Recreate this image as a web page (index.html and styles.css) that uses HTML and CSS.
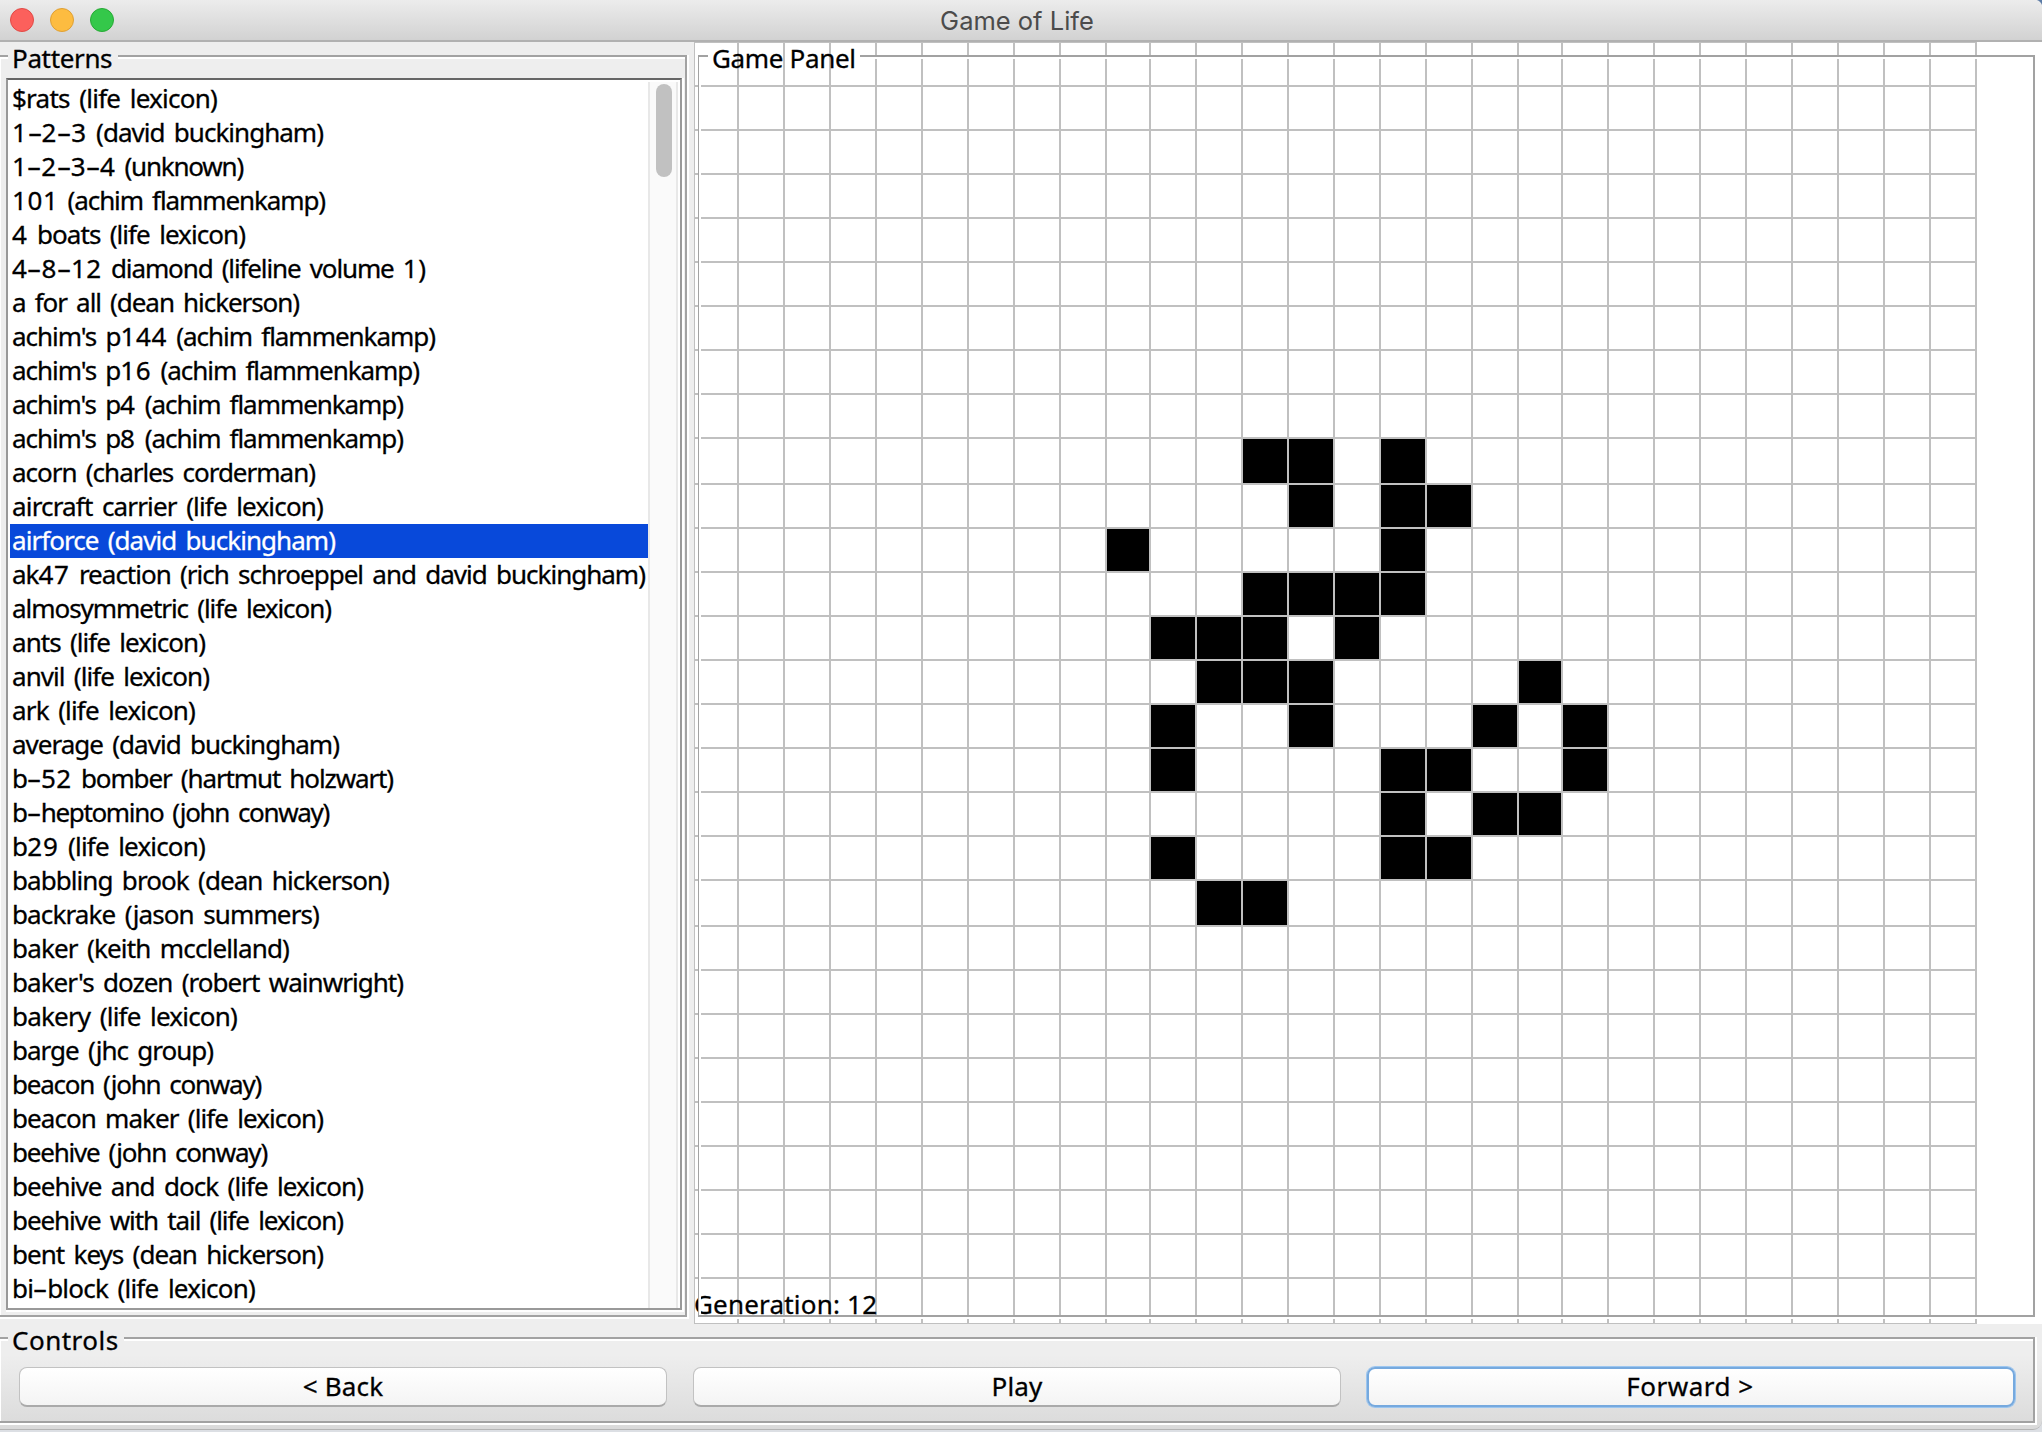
FILE: index.html
```html
<!DOCTYPE html>
<html lang="en">
<head>
<meta charset="utf-8">
<title>Game of Life</title>
<link rel="stylesheet" href="styles.css">
</head>
<body>
<div class="window">
  <header class="titlebar">
    <span class="dot dot-close"></span><span class="dot dot-min"></span><span class="dot dot-max"></span>
    <h1 class="window-title">Game of Life</h1>
  </header>
  <main class="content">
    <section class="group patterns">
      <div class="group-head"><i class="rule rule-stub"></i><h2 class="legend legend-patterns">Patterns</h2><i class="rule rule-fill"></i></div>
      <div class="group-body">
        <div class="listbox">
          <ul class="list" id="list"></ul>
          <div class="track"><div class="thumb"></div></div>
        </div>
      </div>
    </section>
    <section class="game">
      <svg class="board" width="1348" height="1282" viewBox="694 42 1348 1282" shape-rendering="crispEdges">
        <rect x="694" y="42" width="1348" height="1282" fill="#fff"/>
        <g id="cells" fill="#000"></g>
        <g id="lines" fill="#c0c0c0"></g>
        <text class="board-text" x="694" y="1314" textLength="183">Generation: 12</text>
        <!-- etched frame: light line under the grey one -->
        <path fill="#fff" d="M699 57h9v2h-9zM860 57h1173v2h-1173zM699 57h2v1258h-2zM2035 57h2v1262h-2zM698 1317h1339v2h-1339z"/>
        <path fill="#a2a2a2" d="M698 55h10v2h-10zM860 55h1175v2h-1175zM698 55h1v1262h-1zM2033 55h2v1262h-2zM698 1315h1337v2h-1337z"/>
        <text class="board-text" x="712" y="68" textLength="144">Game Panel</text>
      </svg>
    </section>
  </main>
  <section class="group controls">
    <div class="group-head"><i class="rule rule-stub"></i><h2 class="legend legend-controls">Controls</h2><i class="rule rule-fill"></i></div>
    <div class="group-body buttons">
      <button class="btn">&lt; Back</button>
      <button class="btn">Play</button>
      <button class="btn btn-focus">Forward &gt;</button>
    </div>
  </section>
</div>
<script src="app.js"></script>
</body>
</html>
```
FILE: styles.css
```css
* { box-sizing: border-box; margin: 0; padding: 0; }
body { width: 2042px; height: 1432px; overflow: hidden; background: #dcdfe4; font-family: "Noto Sans", sans-serif; font-size: 26px; color: #000; }
.window { display: flex; flex-direction: column; height: 1430px; background: linear-gradient(#eee, #eee 1355px, #dadada 1428px); border-bottom: 1px solid #b4b4b4; border-bottom-right-radius: 9px; overflow: hidden; }

.titlebar { position: relative; flex: none; display: flex; align-items: center; gap: 16px; height: 42px; padding: 0 10px; background: radial-gradient(circle at 0 100%, transparent 8px, #5b7ba6 9px) 100% 0 / 8px 8px no-repeat, linear-gradient(#ececec, #d2d2d2); border-bottom: 2px solid #b1b1b1; }
.dot { width: 24px; height: 24px; border-radius: 50%; border: 1px solid; }
.dot-close { background: #fc605c; border-color: #e14a46; }
.dot-min { background: #fdbc40; border-color: #dfa033; }
.dot-max { background: #34c84a; border-color: #27aa35; }
.window-title { position: absolute; left: 0; right: 8px; top: 0; text-align: center; font: 400 25.5px/42px Inter, sans-serif; color: #4b4b4b; }

.content { flex: none; display: flex; gap: 5px; height: 1282px; }
.group { display: flex; flex-direction: column; }
.group-head { flex: none; display: flex; }
.rule { display: block; margin-top: 13px; border-top: 2px solid #a2a2a2; }
.rule-stub { width: 8px; background: linear-gradient(#fff, #fff) 0 0 / 100% 2px no-repeat, linear-gradient(#fff, #fff) 0 0 / 1px 100% no-repeat; }
.rule-fill { flex: 1; margin-right: 2px; border-right: 2px solid #a2a2a2; box-shadow: inset 0 2px #fff, 2px 0 #fff; }
.group-body { flex: 1; margin: 0 2px 2px 0; border: solid #a2a2a2; border-width: 0 2px 2px 0; box-shadow: inset 1px 0 #fff, 2px 0 #fff, 0 2px #fff, 2px 2px #fff; }
.legend { height: 34px; padding-left: 4px; font-weight: 400; font-size: 26px; line-height: 33px; white-space: nowrap; -webkit-text-stroke: 0.3px; }
.legend-patterns { width: 110px; letter-spacing: -0.35px; }
.legend-controls { width: 116px; letter-spacing: 0.5px; }

.patterns { width: 689px; height: 1277px; }
.patterns .group-head { height: 36px; }
.patterns .group-body { padding: 0 3px 5px 6px; }
.listbox { display: flex; height: 1232px; padding: 2px 2px 0 2px; background: #fff; border: 2px solid #999; border-top-color: #666; box-shadow: 2px 0 #fff, 0 2px #fff, 2px 2px #fff; }
.list { width: 638px; list-style: none; }
.list li { height: 34px; padding-left: 2px; line-height: 33px; white-space: nowrap; word-spacing: 3.5px; letter-spacing: var(--ls, 0px); -webkit-text-stroke: 0.3px; }
.list .selected { background: #0849da; color: #fff; }
.num { letter-spacing: calc(var(--ls, 0px) + 1.7px); }
.hyphen { display: inline-block; width: 14px; letter-spacing: 0; text-align: center; transform: scaleX(1.75); }
.track { width: 30px; padding: 2px 6px; background: #fafafa; border: solid #e8e8e8; border-width: 0 2px; }
.thumb { width: 16px; height: 93px; border-radius: 8px; background: #c1c1c1; }

.board { display: block; overflow: hidden; }
.board-text { font-size: 26px; stroke: #000; stroke-width: 0.3px; }

.controls { flex: none; width: 2037px; height: 101px; }
.controls .group-head { height: 43px; }
.controls .group-body { display: flex; gap: 26px; padding: 0 19px; }
.btn { flex: none; width: 648px; height: 40px; padding-bottom: 1px; border: 1px solid #c2c2c2; border-bottom: 2px solid #aaa; border-radius: 8px; background: linear-gradient(#fff, #f4f4f4); font: 26px/36px "Noto Sans", sans-serif; letter-spacing: 0.15px; color: #000; -webkit-text-stroke: 0.3px; }
.btn-focus { padding-right: 2px; padding-bottom: 2px; border: 2px solid #76a9de; box-shadow: 0 0 0 1px #9cc6f0; line-height: 34px; letter-spacing: 0.5px; }
```
FILE: app.js
```js
// Pattern names with the right edge of each label, in pixels.
const patterns = [
  ["$rats (life lexicon)", 217], ["1-2-3 (david buckingham)", 323], ["1-2-3-4 (unknown)", 243],
  ["101 (achim flammenkamp)", 325], ["4 boats (life lexicon)", 245], ["4-8-12 diamond (lifeline volume 1)", 425],
  ["a for all (dean hickerson)", 299], ["achim's p144 (achim flammenkamp)", 435], ["achim's p16 (achim flammenkamp)", 419],
  ["achim's p4 (achim flammenkamp)", 403], ["achim's p8 (achim flammenkamp)", 403], ["acorn (charles corderman)", 315],
  ["aircraft carrier (life lexicon)", 323], ["airforce (david buckingham)", 335],
  ["ak47 reaction (rich schroeppel and david buckingham)", 645], ["almosymmetric (life lexicon)", 331],
  ["ants (life lexicon)", 205], ["anvil (life lexicon)", 209], ["ark (life lexicon)", 195],
  ["average (david buckingham)", 339], ["b-52 bomber (hartmut holzwart)", 393], ["b-heptomino (john conway)", 329],
  ["b29 (life lexicon)", 205], ["babbling brook (dean hickerson)", 389], ["backrake (jason summers)", 319],
  ["baker (keith mcclelland)", 289], ["baker's dozen (robert wainwright)", 403], ["bakery (life lexicon)", 237],
  ["barge (jhc group)", 213], ["beacon (john conway)", 261], ["beacon maker (life lexicon)", 323],
  ["beehive (john conway)", 267], ["beehive and dock (life lexicon)", 363], ["beehive with tail (life lexicon)", 343],
  ["bent keys (dean hickerson)", 323], ["bi-block (life lexicon)", 255]
];
const selected = 13;
const list = document.getElementById("list");
patterns.forEach(([name, right], i) => {
  const li = document.createElement("li");
  if (i === selected) li.className = "selected";
  const label = document.createElement("span");
  label.innerHTML = name.replace(/\d+|-/g, m => m === "-" ? '<span class="hyphen">-</span>' : `<span class="num">${m}</span>`);
  li.append(label);
  list.append(li);
  const box = label.getBoundingClientRect();
  const glyphs = name.replace(/-/g, "").length;
  li.style.setProperty("--ls", ((right - box.right) / glyphs).toFixed(3) + "px");
});

// Columns and rows are 44 or 46 px wide, depending on how the cell size rounds.
const edges = (start, wide, count) => {
  const out = [start];
  for (let i = 0; i < count; i++) out.push(out[i] + (wide(i) ? 46 : 44));
  return out;
};
const xs = edges(693, i => ![0, 9, 18].includes(i), 28);
const ys = edges(41, i => [9, 19, 28].includes(i), 29);
const alive = {
  9: [12, 13, 15], 10: [13, 15, 16], 11: [9, 15], 12: [12, 13, 14, 15], 13: [10, 11, 12, 14],
  14: [11, 12, 13, 18], 15: [10, 13, 17, 19], 16: [10, 15, 16, 19], 17: [15, 17, 18], 18: [10, 15, 16], 19: [11, 12]
};
const rect = (x, y, w, h) => `<rect x="${x}" y="${y}" width="${w}" height="${h}"/>`;
document.getElementById("cells").innerHTML = Object.entries(alive).flatMap(([r, cols]) =>
  cols.map(c => rect(xs[c], ys[r], xs[c + 1] - xs[c], ys[+r + 1] - ys[r]))).join("");
document.getElementById("lines").innerHTML =
  xs.map(x => rect(x, 41, 2, 1284)).join("") + ys.map(y => rect(693, y, 1284, 2)).join("");
```
